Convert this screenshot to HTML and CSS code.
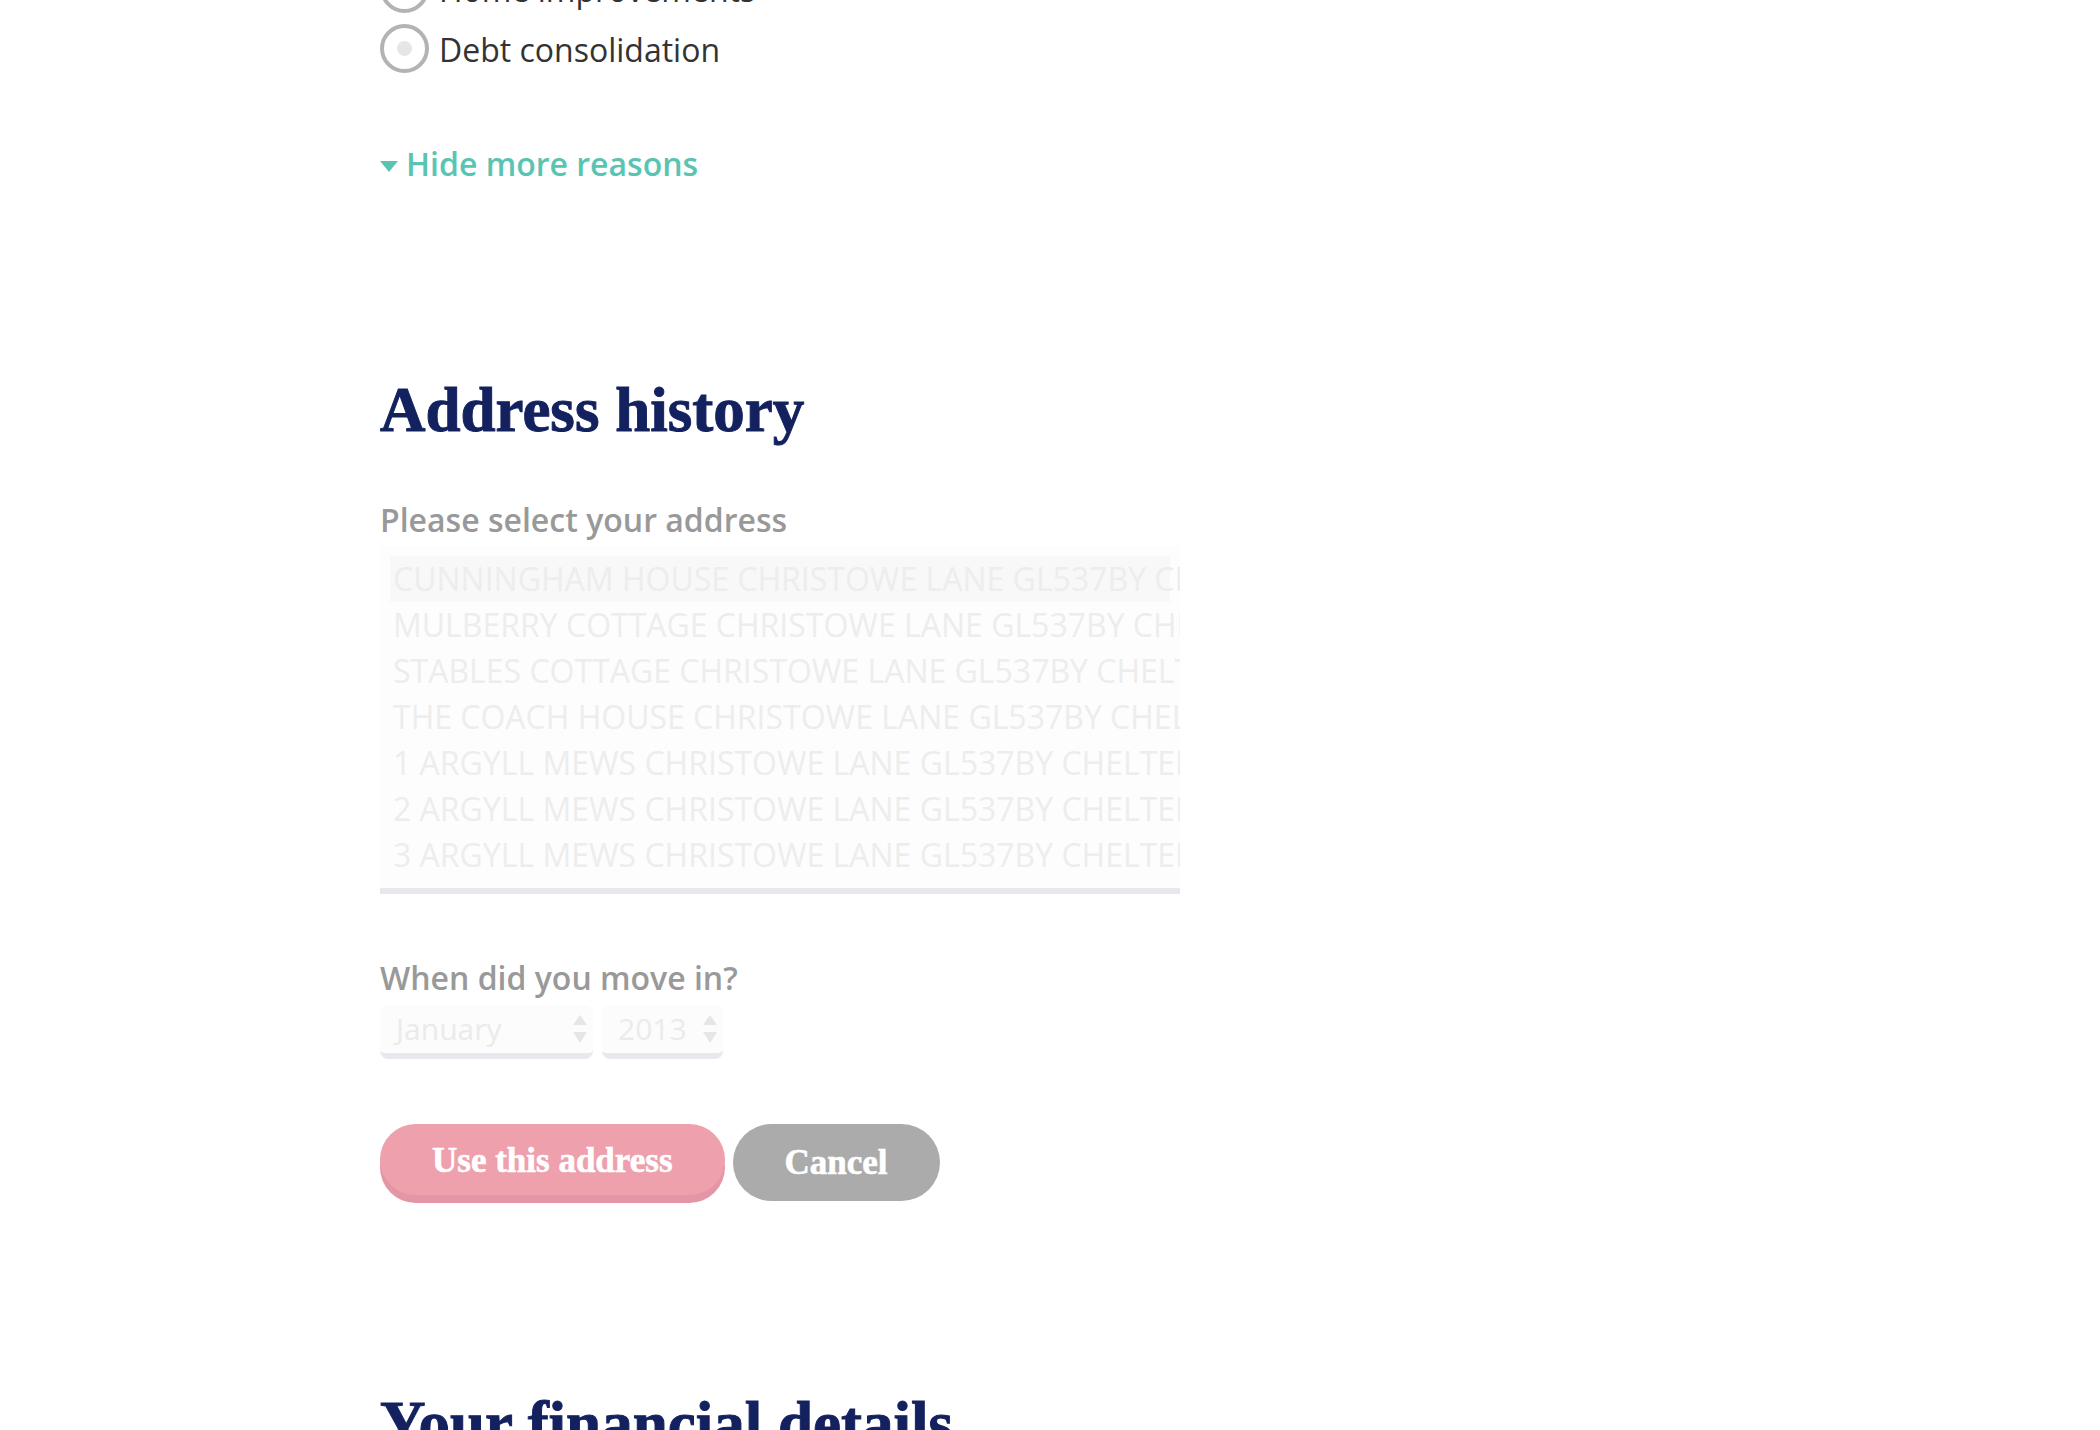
FILE: index.html
```html
<!DOCTYPE html>
<html lang="en">
<head>
<meta charset="utf-8">
<title>Address history</title>
<link rel="stylesheet" href="styles.css">
</head>
<body>
<main class="page">
  <section class="reasons">
    <div class="radio-row">
      <span class="radio"></span>
      <span class="radio-label">Home improvements</span>
    </div>
    <div class="radio-row">
      <span class="radio radio--dot"></span>
      <span class="radio-label">Debt consolidation</span>
    </div>
    <a class="toggle-link" href="#"><span class="caret"></span>Hide more reasons</a>
  </section>

  <section class="address">
    <h2 class="section-title">Address history</h2>
    <p class="field-label">Please select your address</p>
    <div class="addr-list">
      <div class="addr-row addr-row--sel">CUNNINGHAM HOUSE CHRISTOWE LANE GL537BY CHELTENHAM</div>
      <div class="addr-row">MULBERRY COTTAGE CHRISTOWE LANE GL537BY CHELTENHAM</div>
      <div class="addr-row">STABLES COTTAGE CHRISTOWE LANE GL537BY CHELTENHAM</div>
      <div class="addr-row">THE COACH HOUSE CHRISTOWE LANE GL537BY CHELTENHAM</div>
      <div class="addr-row">1 ARGYLL MEWS CHRISTOWE LANE GL537BY CHELTENHAM</div>
      <div class="addr-row">2 ARGYLL MEWS CHRISTOWE LANE GL537BY CHELTENHAM</div>
      <div class="addr-row">3 ARGYLL MEWS CHRISTOWE LANE GL537BY CHELTENHAM</div>
    </div>

    <p class="field-label field-label--move">When did you move in?</p>
    <div class="selects">
      <div class="select select--month">
        <span class="select-value">January</span>
        <span class="arrows"><span class="arr-up"></span><span class="arr-down"></span></span>
      </div>
      <div class="select select--year">
        <span class="select-value">2013</span>
        <span class="arrows"><span class="arr-up"></span><span class="arr-down"></span></span>
      </div>
    </div>

    <div class="actions">
      <button class="btn btn--primary" type="button">Use this address</button>
      <button class="btn btn--cancel" type="button">Cancel</button>
    </div>
  </section>

  <section class="financial">
    <h2 class="section-title">Your financial details</h2>
  </section>
</main>
</body>
</html>
```

FILE: styles.css
```css
html, body {
  margin: 0;
  padding: 0;
  background: #ffffff;
}

body {
  font-family: "Open Sans", "DejaVu Sans", sans-serif;
  color: #333333;
  overflow: hidden;
  height: 1430px;
}

.page {
  padding-left: 380px;
}

/* Reasons */
.reasons {
  margin-top: -42px;
  display: flex;
  flex-direction: column;
}

.radio-row {
  height: 60px;
  display: flex;
  align-items: center;
}

.radio {
  box-sizing: border-box;
  width: 49px;
  height: 49px;
  border: 4px solid #b3b3b3;
  border-radius: 50%;
  display: flex;
  align-items: center;
  justify-content: center;
  flex: none;
}

.radio--dot::after {
  content: "";
  width: 15px;
  height: 15px;
  border-radius: 50%;
  background: #e6e6e6;
}

.radio-label {
  margin-left: 10px;
  font-size: 32px;
  line-height: 44px;
  padding-top: 3px;
  color: #333333;
}

.toggle-link {
  margin-top: 64px;
  display: inline-flex;
  align-items: center;
  align-self: flex-start;
  font-size: 32px;
  line-height: 44px;
  font-weight: 600;
  color: #5ac4b3;
  text-decoration: none;
}

.caret {
  width: 0;
  height: 0;
  border-left: 9px solid transparent;
  border-right: 9px solid transparent;
  border-top: 11px solid #5ac4b3;
  margin-right: 8px;
  margin-top: 4px;
}

/* Headings */
.section-title {
  margin: 0;
  font-family: "Liberation Serif", "Times New Roman", serif;
  font-weight: 700;
  font-size: 63px;
  line-height: 76px;
  color: #13215f;
  -webkit-text-stroke: 1px #13215f;
}

.address {
  margin-top: 186px;
}

.field-label {
  margin: 50px 0 0;
  font-size: 32px;
  line-height: 44px;
  font-weight: 600;
  color: #999999;
}

.field-label--move {
  margin-top: 62px;
}

/* Address list */
.addr-list {
  margin-top: 4px;
  width: 800px;
  box-sizing: border-box;
  padding: 10px 0 10px 0;
  background: #fdfdfd;
  border-bottom: 6px solid #e7e7ef;
  overflow: hidden;
}

.addr-row {
  margin: 0 10px;
  height: 46px;
  line-height: 46px;
  padding-left: 3px;
  font-size: 32px;
  color: #ededed;
  white-space: nowrap;
  overflow: visible;
}

.addr-row--sel {
  background: #f8f8f8;
}

/* Date selects */
.selects {
  margin-top: 5px;
  display: flex;
  gap: 9px;
}

.select {
  position: relative;
  box-sizing: content-box;
  height: 48px;
  background: #fcfcfc;
  border-bottom: 6px solid #e8e8ee;
  border-radius: 8px;
  display: flex;
  align-items: flex-start;
}

.select--month {
  width: 213px;
}

.select--year {
  width: 121px;
}

.select-value {
  padding-left: 16px;
  padding-top: 3px;
  font-size: 30px;
  line-height: 41px;
  color: #ebebeb;
}

.arrows {
  position: absolute;
  right: 6px;
  top: 10px;
  display: flex;
  flex-direction: column;
  gap: 7px;
}

.arr-up,
.arr-down {
  width: 0;
  height: 0;
  border-left: 7px solid transparent;
  border-right: 7px solid transparent;
}

.arr-up {
  border-bottom: 10px solid #e6e6e6;
}

.arr-down {
  border-top: 11px solid #e6e6e6;
}

/* Buttons */
.actions {
  margin-top: 65px;
  display: flex;
  align-items: flex-start;
  gap: 8px;
}

.btn {
  border: 0;
  margin: 0;
  padding: 0 52px;
  border-radius: 40px;
  font-family: "Liberation Serif", "Times New Roman", serif;
  font-weight: 700;
  font-size: 35px;
  color: #ffffff;
  -webkit-text-stroke: 0.6px #ffffff;
  cursor: pointer;
  display: flex;
  align-items: center;
  justify-content: center;
}

.btn--primary {
  height: 71px;
  padding-top: 3px;
  background: #eea0ad;
  box-shadow: 0 8px 0 #e496a6;
}

.btn--cancel {
  height: 77px;
  background: #ababab;
}

.financial {
  margin-top: 185px;
}
```
